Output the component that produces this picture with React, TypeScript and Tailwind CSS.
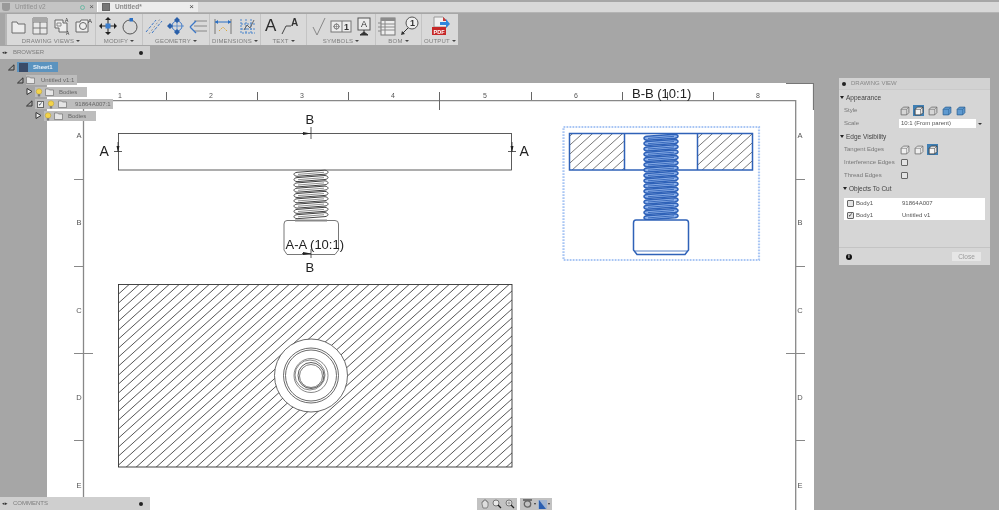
const sans = "font-['Liberation_Sans',Arial,sans-serif]";

function ToolIcon({ children, w = 22 }: { children: React.ReactNode; w?: number }) {
  return (
    <svg width={w} height="20" viewBox={`0 0 ${w} 20`} fill="none" className="shrink-0">
      {children}
    </svg>
  );
}

function ToolGroup({ label, width, children }: { label: string; width: number; children: React.ReactNode }) {
  return (
    <div className="flex shrink-0 flex-col items-center border-r border-[#c4c4c4] last:border-r-0" style={{ width }}>
      <div className="flex h-[22px] w-full items-center justify-evenly pt-[1px]">{children}</div>
      <div className="mt-[1px] flex items-center gap-[2px] text-[6px] leading-[8px] tracking-[0.2px] text-[#7d7d7d]">
        {label}
        <span className="h-0 w-0 border-x-[2px] border-t-[2px] border-x-transparent border-t-[#444]" />
      </div>
    </div>
  );
}

function Toolbar() {
  return (
    <div className={`ml-[5px] mt-[1px] flex h-[31px] w-[453px] border-l-2 border-[#b6b6b6] bg-[#d9d9d9] ${sans}`}>
      <ToolGroup label="DRAWING VIEWS" width={89}>
        <ToolIcon>
          <path d="M5 6h5l1 2h7v9H5z" fill="#ececec" stroke="#6d6d6d" />
        </ToolIcon>
        <ToolIcon>
          <path d="M4 2h14v16H4z" fill="#e8e8e8" stroke="#777" />
          <path d="M4 6h14M11 6v12M4 12h14" stroke="#777" />
          <path d="M4 2h14v4H4z" fill="#a8a8a8" />
        </ToolIcon>
        <ToolIcon>
          <path d="M4 4h8v3h4v9H8v-4H4z" fill="#eee" stroke="#666" />
          <path d="M6 7h4v3H6z" stroke="#888" />
          <text x="14" y="6" fontSize="5" fill="#333">A</text>
          <text x="15" y="19" fontSize="5" fill="#333">A</text>
        </ToolIcon>
        <ToolIcon>
          <path d="M3 6h4l1-2h7v12H3z" fill="#eee" stroke="#666" />
          <circle cx="10" cy="10" r="3.5" stroke="#666" />
          <text x="15" y="7" fontSize="6" fill="#333">A</text>
        </ToolIcon>
      </ToolGroup>
      <ToolGroup label="MODIFY" width={47}>
        <ToolIcon>
          <path d="M11 1l3 3h-6zM11 19l3-3H8zM2 10l3-3v6zM20 10l-3-3v6z" fill="#222" />
          <path d="M11 4v12M5 10h12" stroke="#222" />
          <rect x="8.5" y="7.5" width="5" height="5" fill="#3b7fd0" />
        </ToolIcon>
        <ToolIcon>
          <circle cx="11" cy="11" r="7" stroke="#555" />
          <rect x="10.5" y="2" width="3.5" height="3.5" fill="#2a6fc4" />
        </ToolIcon>
      </ToolGroup>
      <ToolGroup label="GEOMETRY" width={67}>
        <ToolIcon>
          <path d="M3 16L13 4M9 17L19 5" stroke="#3d78c7" strokeDasharray="3 1.5" />
          <path d="M6 18L17 3" stroke="#999" strokeDasharray="2 2" />
        </ToolIcon>
        <ToolIcon>
          <circle cx="12" cy="10" r="5" stroke="#3d78c7" />
          <path d="M5 10h14M12 3v14" stroke="#3d78c7" strokeWidth="0.7" />
          <path d="M2 10l3-3 3 3-3 3zM9 4l3-3 3 3-3 3zM9 16l3-3 3 3-3 3z" fill="#2a5fa8" />
        </ToolIcon>
        <ToolIcon>
          <path d="M7 5h13M7 10h13M7 15h13" stroke="#888" />
          <path d="M3 11l6-6M3 11l6 6" stroke="#3d78c7" strokeWidth="1.3" />
        </ToolIcon>
      </ToolGroup>
      <ToolGroup label="DIMENSIONS" width={51}>
        <ToolIcon>
          <path d="M3 3v15M19 3v15" stroke="#777" />
          <path d="M3 6h16" stroke="#2a6fc4" />
          <path d="M3 6l3-2v4zM19 6l-3-2v4z" fill="#2a6fc4" />
          <path d="M7 15l4-4 4 4" stroke="#d9a63a" strokeDasharray="1.5 1" />
        </ToolIcon>
        <ToolIcon>
          <path d="M5 3v14h14M10 3v14M15 3v14M5 8h14M5 13h14" stroke="#4d86cc" strokeDasharray="2 1" />
          <path d="M8 14l3-5 3 3 4-8" stroke="#666" />
        </ToolIcon>
      </ToolGroup>
      <ToolGroup label="TEXT" width={46}>
        <span className="text-[17px] leading-[20px] text-[#2c2c2c]">A</span>
        <ToolIcon>
          <path d="M2 18l4-8h5" stroke="#444" />
          <text x="11" y="10" fontSize="10" fontWeight="700" fill="#333">A</text>
        </ToolIcon>
      </ToolGroup>
      <ToolGroup label="SYMBOLS" width={69}>
        <ToolIcon>
          <path d="M5 11l4 8 8-17" stroke="#888" />
        </ToolIcon>
        <ToolIcon>
          <rect x="1" y="5" width="20" height="11" fill="#ececec" stroke="#777" />
          <path d="M12 5v11" stroke="#777" />
          <circle cx="6.5" cy="10.5" r="2.5" stroke="#777" />
          <path d="M3 10.5h7M6.5 7v7" stroke="#777" strokeWidth="0.6" />
          <text x="14" y="14" fontSize="9" fontWeight="700" fill="#333">1</text>
        </ToolIcon>
        <ToolIcon>
          <rect x="5" y="2" width="12" height="12" fill="#ececec" stroke="#555" />
          <text x="8" y="11" fontSize="9" fill="#333">A</text>
          <path d="M11 14v3M7 19l4-3 4 3z" fill="#333" stroke="#333" />
        </ToolIcon>
      </ToolGroup>
      <ToolGroup label="BOM" width={46}>
        <ToolIcon>
          <rect x="5" y="2" width="14" height="17" fill="#eee" stroke="#777" />
          <path d="M5 2h14v3H5z" fill="#8c8c8c" />
          <path d="M5 8h14M5 11h14M5 14h14M9 5v14M2 7h3M2 11h3M2 15h3" stroke="#888" />
        </ToolIcon>
        <ToolIcon>
          <circle cx="13" cy="7" r="6" fill="#eee" stroke="#555" />
          <text x="11" y="10" fontSize="9" fontWeight="700" fill="#333">1</text>
          <path d="M9 12l-5 5" stroke="#333" />
          <path d="M2 19l1-4 3 3z" fill="#333" />
        </ToolIcon>
      </ToolGroup>
      <ToolGroup label="OUTPUT" width={36}>
        <ToolIcon>
          <path d="M5 1h9l4 4v6H5z" fill="#f1f1f1" stroke="#999" />
          <path d="M14 1l4 4h-4z" fill="#cc3a3a" />
          <rect x="3" y="11" width="14" height="8" fill="#c62828" />
          <text x="4.5" y="17.5" fontSize="5.5" fontWeight="700" fill="#fff">PDF</text>
          <path d="M11 6h6V3l4 5-4 4V9h-6z" fill="#2f86dd" />
        </ToolIcon>
      </ToolGroup>
    </div>
  );
}

function TreeRow({ left, width, top, children, active }: { left: number; width: number; top: number; children: React.ReactNode; active?: boolean }) {
  return (
    <div
      className={`absolute flex h-[10px] items-center text-[6px] text-[#666] ${active ? "bg-[#5b93bf] font-bold text-white" : "bg-[#bdbdbd]"}`}
      style={{ left, width, top }}
    >
      {children}
    </div>
  );
}

function Bulb() {
  return (
    <svg width="8" height="9" viewBox="0 0 8 9" className="shrink-0">
      <circle cx="4" cy="3.5" r="2.8" fill="#f3d34a" stroke="#b09a3c" strokeWidth="0.5" />
      <rect x="2.8" y="6.2" width="2.4" height="2.3" fill="#7a7a7a" />
    </svg>
  );
}

function Folder() {
  return (
    <svg width="9" height="8" viewBox="0 0 9 8" className="shrink-0">
      <path d="M0.5 1h3l1 1h4v5.5h-8z" fill="#e6e6e6" stroke="#666" strokeWidth="0.6" />
    </svg>
  );
}

function Collapse({ x, y, open }: { x: number; y: number; open?: boolean }) {
  return (
    <svg width="7" height="7" viewBox="0 0 7 7" className="absolute" style={{ left: x, top: y }}>
      {open ? <path d="M0.5 6h5.5V0.8z" fill="none" stroke="#333" /> : <path d="M1 0.5l5 3-5 3z" fill="#eee" stroke="#333" />}
    </svg>
  );
}

function Browser() {
  return (
    <div className={`absolute left-0 top-[46px] h-[76px] w-[150px] ${sans}`}>
      <div className="flex h-[13px] items-center bg-[#cfcfcf] px-[2px] text-[6px] text-[#7d7d7d]">
        <span className="mr-[5px] text-[5px] text-[#333]">◂▸</span>
        BROWSER
        <span className="ml-auto mr-[5px] h-[4px] w-[4px] rounded-full bg-[#222]" />
      </div>
      <Collapse x={8} y={18} open />
      <TreeRow left={17} width={41} top={16} active>
        <span className="ml-[2px] h-[9px] w-[9px] bg-[#3a4b68]" />
        <span className="ml-[5px] text-[#e8f0f7]">Sheet1</span>
      </TreeRow>
      <Collapse x={17} y={31} open />
      <TreeRow left={26} width={51} top={29}>
        <Folder />
        <span className="ml-[6px]">Untitled v1:1</span>
      </TreeRow>
      <Collapse x={26} y={42} />
      <TreeRow left={35} width={52} top={41}>
        <Bulb />
        <span className="ml-[2px]"><Folder /></span>
        <span className="ml-[5px]">Bodies</span>
      </TreeRow>
      <Collapse x={26} y={54} open />
      <TreeRow left={35} width={78} top={53}>
        <span className="ml-[2px] flex h-[7px] w-[7px] items-center justify-center border border-[#666] bg-[#eee] text-[6px] leading-none text-[#234]">✓</span>
        <span className="ml-[3px]"><Bulb /></span>
        <span className="ml-[3px]"><Folder /></span>
        <span className="ml-[8px]">91864A007:1</span>
      </TreeRow>
      <Collapse x={35} y={66} />
      <TreeRow left={44} width={52} top={65}>
        <Bulb />
        <span className="ml-[2px]"><Folder /></span>
        <span className="ml-[5px]">Bodies</span>
      </TreeRow>
    </div>
  );
}

function Check({ on }: { on?: boolean }) {
  return (
    <span className="flex h-[7px] w-[7px] items-center justify-center rounded-[1px] border border-[#666] bg-[#e4e4e4] text-[6px] leading-none text-[#222]">
      {on ? "✓" : ""}
    </span>
  );
}

function Cube({ fill = "#eee", stroke = "#666", selected }: { fill?: string; stroke?: string; selected?: boolean }) {
  return (
    <span className={`flex h-[11px] w-[11px] items-center justify-center ${selected ? "bg-[#3f7fb4]" : ""}`}>
      <svg width="10" height="10" viewBox="0 0 9 9">
        <path d="M1 3l2-2h5v5l-2 2H1z" fill={fill} stroke={stroke} strokeWidth="0.7" />
        <path d="M1 3h5v5M6 3l2-2" fill="none" stroke={stroke} strokeWidth="0.5" />
      </svg>
    </span>
  );
}

function PanelRow({ label, children }: { label: string; children: React.ReactNode }) {
  return (
    <div className="flex h-[13px] items-center">
      <span className="w-[60px] pl-[5px] text-[#777]">{label}</span>
      <div className="flex items-center gap-[3px]">{children}</div>
    </div>
  );
}

function SectionHead({ label, indent = 1 }: { label: string; indent?: number }) {
  return (
    <div className="flex h-[13px] items-center text-[6.5px] text-[#444]" style={{ paddingLeft: indent }}>
      <span className="mr-[2px] h-0 w-0 border-x-[2.5px] border-t-[3px] border-x-transparent border-t-[#222]" />
      {label}
    </div>
  );
}

function DrawingPanel() {
  return (
    <div className={`absolute left-[839px] top-[78px] flex h-[187px] w-[151px] flex-col bg-[#d6d6d6] text-[6px] ${sans}`}>
      <div className="flex h-[12px] items-center border-b border-[#cacaca] bg-[#d2d2d2] pl-[3px] text-[#888]">
        <span className="mr-[5px] h-[4px] w-[4px] rounded-full bg-[#222]" />
        DRAWING VIEW
      </div>
      <div className="h-[1px]" />
      <SectionHead label="Appearance" />
      <PanelRow label="Style">
        <Cube fill="none" />
        <Cube selected fill="#f4f4f4" stroke="#333" />
        <Cube fill="none" />
        <Cube fill="#5f9ad0" stroke="#2a5f93" />
        <Cube fill="#5f9ad0" stroke="#2a5f93" />
      </PanelRow>
      <PanelRow label="Scale">
        <div className="flex h-[9px] w-[77px] items-center bg-white pl-[2px] text-[#555]">10:1 (From parent)</div>
        <span className="-ml-[1px] h-0 w-0 border-x-[2px] border-t-[2px] border-x-transparent border-t-[#333]" />
      </PanelRow>
      <SectionHead label="Edge Visibility" />
      <PanelRow label="Tangent Edges">
        <Cube />
        <Cube />
        <Cube selected fill="#f4f4f4" stroke="#333" />
      </PanelRow>
      <PanelRow label="Interference Edges">
        <span className="ml-[2px]"><Check /></span>
      </PanelRow>
      <PanelRow label="Thread Edges">
        <span className="ml-[2px]"><Check /></span>
      </PanelRow>
      <SectionHead label="Objects To Cut" indent={4} />
      <div className="mx-[5px] mt-[3px] flex h-[22px] flex-col justify-center gap-[3px] bg-white pl-[3px] text-[#555]">
        <div className="flex items-center">
          <Check />
          <span className="ml-[2px] w-[46px]">Body1</span>
          91864A007
        </div>
        <div className="flex items-center">
          <Check on />
          <span className="ml-[2px] w-[46px]">Body1</span>
          Untitled v1
        </div>
      </div>
      <div className="mt-auto flex h-[18px] items-center justify-between border-t border-[#c4c4c4] pl-[7px] pr-[9px]">
        <span className="flex h-[6px] w-[6px] items-center justify-center rounded-full bg-[#111] text-[5px] font-bold text-white">i</span>
        <span className="flex h-[9px] w-[29px] items-center justify-center bg-[#e6e6e6] text-[6.5px] text-[#9a9a9a]">Close</span>
      </div>
    </div>
  );
}

// screw thread: rounded crests on both flanks joined by slanted turns
function Thread({ x0, x1, y0, y1, color, w, fill }: { x0: number; x1: number; y0: number; y1: number; color: string; w: number; fill: string }) {
  const pitch = 5.3;
  const n = Math.floor((y1 - y0) / pitch);
  const turns = Array.from({ length: n }, (_, i) => y0 + 1 + i * pitch);
  return (
    <g stroke={color} strokeWidth={w} fill="none">
      {turns.map((y) => (
        <g key={y}>
          <path
            d={`M${x0 + 3} ${y + 1.3}C${x0 - 1} ${y + 1.8} ${x0 - 1} ${y + 4.8} ${x0 + 3} ${y + 5.3}L${x1 - 3} ${y + 3.2}C${x1 + 1} ${y + 2.7} ${x1 + 1} ${y - 0.3} ${x1 - 3} ${y - 0.8}Z`}
            fill={fill}
          />
          <path d={`M${x0 + 4} ${y + 3.4}L${x1 - 4} ${y + 1.3}`} strokeWidth={w * 0.6} />
        </g>
      ))}
    </g>
  );
}

function Drawing() {
  const topTicks = [166, 257, 348, 531, 622, 667, 713];
  const nums: [string, number][] = [["1", 120], ["2", 211], ["3", 302], ["4", 393], ["5", 485], ["6", 576], ["8", 758]];
  const rows: [string, number][] = [["A", 135], ["B", 222], ["C", 310], ["D", 397], ["E", 485]];
  const blue = "#2f62b8";
  const gray = "#555";
  return (
    <svg width="767" height="427" viewBox="47 83 767 427" className={`block bg-white ${sans}`} fontFamily="'Liberation Sans', Arial, sans-serif">
      <defs>
        <pattern id="hatch" width="10" height="9" patternUnits="userSpaceOnUse" patternTransform="translate(3 2)">
          <path d="M-1 9.9L11 -0.9M-1 0.9L1 -0.9M9 9.9L11 8.1" stroke="#555" strokeWidth="1" />
        </pattern>
        <pattern id="hatch2" width="10" height="9" patternUnits="userSpaceOnUse" patternTransform="translate(1 0)">
          <path d="M-1 9.9L11 -0.9M-1 0.9L1 -0.9M9 9.9L11 8.1" stroke="#555" strokeWidth="0.8" />
        </pattern>
      </defs>

      {/* sheet frame */}
      <path d="M83.5 100.7H795.7V510M83.5 100.7V510" fill="none" stroke="#888" strokeWidth="1.3" />
      <path d="M786 83.5H813.5V110" fill="none" stroke="#777" strokeWidth="1.2" />
      {topTicks.map((x) => (
        <path key={x} d={`M${x + 0.5} 92V100`} stroke="#666" />
      ))}
      <path d="M439.5 92V110" stroke="#666" />
      <path d="M74 353.5H93M786 353.5H805" stroke="#888" />
      <path d="M74 179.5H83M74 266.5H83M74 440.5H83M796 179.5H805M796 266.5H805M796 440.5H805" stroke="#888" />
      <g fontSize="7" fill="#555" textAnchor="middle">
        {nums.map(([t, x]) => (
          <text key={t} x={x} y="98">{t}</text>
        ))}
      </g>
      <g fontSize="7.5" fill="#555" textAnchor="middle">
        {rows.map(([t, y]) => (
          <g key={t}>
            <text x="79" y={y + 3}>{t}</text>
            <text x="800" y={y + 3}>{t}</text>
          </g>
        ))}
      </g>

      {/* left view */}
      <rect x="118.5" y="133.5" width="393" height="36.5" fill="white" stroke="#333" strokeWidth="0.8" />
      <Thread x0={294} x1={328} y0={170} y1={220} color="#444" w={1} fill="#fff" />
      <path d="M287 220.5H335Q338.5 220.5 338.5 224V250L335 254.5H287L284 250V224Q284 220.5 287 220.5Z" fill="white" stroke={gray} strokeWidth="0.8" />
      <path d="M295 220.5H327" stroke="#888" strokeWidth="2" />
      <path d="M118 142V152M114 151.5H122M512 142V152M508 151.5H516" stroke="#333" strokeWidth="0.8" />
      <path d="M116.5 146L118 152 119.5 146zM510.5 146L512 152 513.5 146z" fill="#222" />
      <path d="M302 133.5H311M311 127V139M302 253.5H311M311 249V258" stroke="#333" strokeWidth="0.8" />
      <path d="M303 132L311 133.5 303 135zM303 252L311 253.5 303 255z" fill="#222" />
      <g fontSize="13" fill="#222">
        <text x="99.5" y="156" fontSize="14">A</text>
        <text x="519.5" y="156" fontSize="14">A</text>
        <text x="305.5" y="124">B</text>
        <text x="305.5" y="272">B</text>
        <text x="285.5" y="248.5">A-A (10:1)</text>
        <text x="632" y="97.5">B-B (10:1)</text>
      </g>

      {/* section B-B, selected */}
      <rect x="563.5" y="127" width="195.5" height="133" fill="none" stroke="#a9c6f4" strokeWidth="2.2" strokeDasharray="1.8 1.2" />
      <rect x="570" y="134" width="54" height="36" fill="url(#hatch2)" />
      <rect x="698" y="134" width="54" height="36" fill="url(#hatch2)" />
      <rect x="569.5" y="133.5" width="183" height="36.5" fill="none" stroke={blue} strokeWidth="1.5" />
      <path d="M624.5 133.5V170M697.5 133.5V170" stroke={blue} strokeWidth="1.5" />
      <Thread x0={644} x1={678} y0={134} y1={220} color={blue} w={1.5} fill="#8fb2ea" />
      <path d="M636 220H686Q688.5 220 688.5 223V250L685 254.5H637L633.5 250V223Q633.5 220 636 220Z" fill="white" stroke={blue} strokeWidth="1.5" />
      <path d="M635 251H687" stroke={blue} strokeWidth="0.8" />

      {/* top-down section */}
      <rect x="118.5" y="284.5" width="393.5" height="182.5" fill="url(#hatch)" stroke="#333" strokeWidth="0.9" />
      <circle cx="311" cy="375.5" r="36.5" fill="white" stroke="#444" strokeWidth="0.8" />
      <circle cx="311" cy="375.5" r="27.5" fill="none" stroke="#444" strokeWidth="0.8" />
      <circle cx="311" cy="375.5" r="25.5" fill="none" stroke="#444" strokeWidth="0.8" />
      <circle cx="311" cy="375.5" r="17" fill="none" stroke="#555" strokeWidth="0.7" />
      <circle cx="310" cy="375" r="15" fill="none" stroke="#555" strokeWidth="0.7" />
      <circle cx="311" cy="375.5" r="13" fill="none" stroke="#333" strokeWidth="0.8" />
      <circle cx="311" cy="376" r="11.5" fill="none" stroke="#444" strokeWidth="0.7" />
    </svg>
  );
}

function NavBar() {
  return (
    <div className="absolute left-[477px] top-[498px] flex h-[12px] gap-[3px]">
      <div className="flex w-[40px] items-center justify-evenly bg-[#c2c2c2]">
        <svg width="10" height="10" viewBox="0 0 10 10"><path d="M2 5V3l1 0V2l1 0V1h2v1l1 0v1h1v4l-1 2H3z" fill="#ddd" stroke="#666" strokeWidth="0.7" /></svg>
        <svg width="10" height="10" viewBox="0 0 10 10"><circle cx="4" cy="4" r="3" fill="#e8e8e8" stroke="#777" /><path d="M6 6l3 3" stroke="#222" strokeWidth="1.3" /></svg>
        <svg width="10" height="10" viewBox="0 0 10 10"><circle cx="4" cy="4" r="3" fill="#e0e0e0" stroke="#777" /><path d="M6 6l3 3" stroke="#222" strokeWidth="1.3" /><path d="M2.5 4h3M4 2.5v3" stroke="#777" strokeWidth="0.6" /></svg>
      </div>
      <div className="flex w-[32px] items-center justify-evenly bg-[#c2c2c2]">
        <span className="flex items-center gap-[1px]">
          <svg width="11" height="10" viewBox="0 0 11 10"><path d="M1 1h9" stroke="#555" strokeWidth="1.5" /><circle cx="5.5" cy="5" r="3.2" fill="none" stroke="#666" strokeWidth="1.3" /></svg>
          <span className="h-0 w-0 border-x-[1.5px] border-t-[2px] border-x-transparent border-t-[#333]" />
        </span>
        <span className="flex items-center gap-[1px]">
          <svg width="9" height="9" viewBox="0 0 9 9"><rect width="9" height="9" fill="#9fb4d0" /><path d="M1 0l7 9H1z" fill="#2a5fb0" /></svg>
          <span className="h-0 w-0 border-x-[1.5px] border-t-[2px] border-x-transparent border-t-[#333]" />
        </span>
      </div>
    </div>
  );
}

export default function App() {
  return (
    <div className={`relative h-[510px] w-[999px] overflow-hidden bg-[#a6a6a6] blur-[0.35px] ${sans}`}>
      {/* document tabs */}
      <div className="flex h-[13px] items-stretch border-b border-[#b4b4b4] pt-[2px] text-[6.5px]">
        <div className="flex w-[97px] items-center bg-[#c4c4c4] pl-[2px] pr-[3px] text-[#8f8f8f]">
          <span className="h-[8px] w-[8px] rounded-b-[3px] bg-[#9a9a9a]" />
          <span className="ml-[5px]">Untitled v2</span>
          <span className="ml-auto mr-[4px] h-[5px] w-[5px] rounded-full border border-[#6db8a4]" />
          <span className="text-[8px] leading-none text-[#555]">×</span>
        </div>
        <div className="flex w-[101px] items-center border-l border-white bg-[#ececec] px-[4px] font-bold text-[#8a8a8a]">
          <span className="h-[8px] w-[8px] border border-[#666] bg-[#777]" />
          <span className="ml-[5px]">Untitled*</span>
          <span className="ml-auto text-[8px] font-normal leading-none text-[#444]">×</span>
        </div>
        <div className="flex-1 bg-[#d8d8d8]" />
      </div>
      <Toolbar />
      {/* sheet sits on the grey canvas */}
      <div className="ml-[47px] mt-[38px] w-[767px]">
        <Drawing />
      </div>
      <Browser />
      <DrawingPanel />
      <NavBar />
      <div className="absolute bottom-0 left-0 flex h-[13px] w-[150px] items-center bg-[#cfcfcf] px-[2px] text-[6px] text-[#7d7d7d]">
        <span className="mr-[5px] text-[5px] text-[#333]">◂▸</span>
        COMMENTS
        <span className="ml-auto mr-[5px] h-[4px] w-[4px] rounded-full bg-[#222]" />
      </div>
    </div>
  );
}
